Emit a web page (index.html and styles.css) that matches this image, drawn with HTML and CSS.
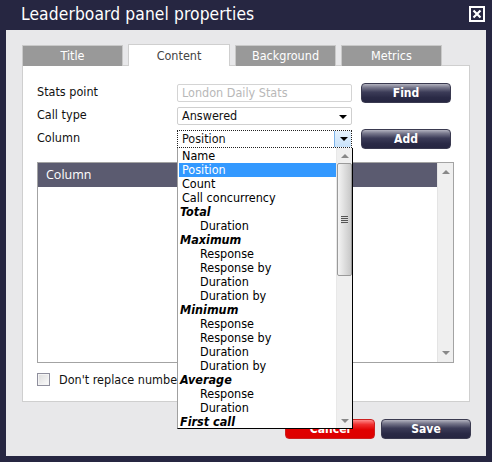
FILE: index.html
```html
<!DOCTYPE html>
<html>
<head>
<meta charset="utf-8">
<link rel="stylesheet" href="styles.css">
</head>
<body>
<div class="titlebar">
  <span class="title">Leaderboard panel properties</span>
  <svg class="close" width="16" height="16" viewBox="0 0 16 16"><rect x="1" y="1" width="14" height="14" fill="none" stroke="#fff" stroke-width="2"/><path d="M4.5 4.5 L11.5 11.5 M11.5 4.5 L4.5 11.5" stroke="#fff" stroke-width="2.2"/></svg>
</div>
<div class="dialog">
  <div class="tabs">
    <div class="tab">Title</div>
    <div class="tab active">Content</div>
    <div class="tab">Background</div>
    <div class="tab">Metrics</div>
  </div>
  <div class="panel">
    <div class="form">
      <div class="label">Stats point</div>
      <div class="input placeholder">London Daily Stats</div>
      <div class="btn dark">Find</div>
      <div class="label">Call type</div>
      <div class="input select">Answered<span class="tri"></span></div>
      <div></div>
      <div class="label">Column</div>
      <div class="input select focus">Position<span class="arrowbox"><span class="tri"></span></span></div>
      <div class="btn dark">Add</div>
    </div>
    <div class="table">
      <div class="tmain">
        <div class="thead">Column</div>
      </div>
      <div class="vscroll">
        <span class="up"></span>
        <span class="down"></span>
      </div>
    </div>
    <div class="checkrow">
      <span class="checkbox"></span>
      <span class="checklabel">Don't replace numbers with names</span>
    </div>
  </div>
  <div class="footer">
    <div class="btn red">Cancel</div>
    <div class="btn dark">Save</div>
  </div>
</div>
<div class="dropdown">
  <div class="options">
    <div class="opt">Name</div>
    <div class="opt sel">Position</div>
    <div class="opt">Count</div>
    <div class="opt">Call concurrency</div>
    <div class="grp">Total</div>
    <div class="opt sub">Duration</div>
    <div class="grp">Maximum</div>
    <div class="opt sub">Response</div>
    <div class="opt sub">Response by</div>
    <div class="opt sub">Duration</div>
    <div class="opt sub">Duration by</div>
    <div class="grp">Minimum</div>
    <div class="opt sub">Response</div>
    <div class="opt sub">Response by</div>
    <div class="opt sub">Duration</div>
    <div class="opt sub">Duration by</div>
    <div class="grp">Average</div>
    <div class="opt sub">Response</div>
    <div class="opt sub">Duration</div>
    <div class="grp">First call</div>
  </div>
  <div class="dscroll">
    <span class="up"></span>
    <span class="thumb"><span class="grip"></span></span>
    <span class="down"></span>
  </div>
</div>
</body>
</html>
```
FILE: styles.css
```css
* { box-sizing: border-box; }
html, body { margin: 0; padding: 0; }
body {
  width: 492px;
  height: 462px;
  overflow: hidden;
  background: #262641;
  font-family: "DejaVu Sans Condensed", "DejaVu Sans", sans-serif;
  font-size: 12.5px;
  color: #111;
  position: relative;
}
.titlebar {
  height: 30px;
  display: flex;
  align-items: center;
  justify-content: space-between;
  padding: 0 7px 2px 21px;
}
.title {
  color: #fff;
  font-size: 17.3px;
  letter-spacing: 0.1px;
}
.close { display: block; margin-top: 0; }
.dialog {
  margin: 0 6px;
  height: 426px;
  background: #e8e8ea;
  padding: 14px 15px 0 16px;
}
.tabs {
  display: flex;
  gap: 5px;
  align-items: flex-end;
  height: 22px;
  margin-bottom: -1px;
}
.tab {
  width: 101px;
  height: 21px;
  background: #999;
  border: 1px solid #c9c9c9;
  border-bottom: none;
  color: #fff;
  text-align: center;
  line-height: 20px;
}
.tab.active {
  position: relative;
  height: 22px;
  width: 102px;
  background: #fff;
  color: #444;
  border-color: #cfcfcf;
  line-height: 22px;
}
.panel {
  width: 448px;
  height: 337px;
  background: #fff;
  border: 1px solid #cfcfcf;
  padding: 15px 0 0 14px;
}
.form {
  display: grid;
  grid-template-columns: 131px 175px 90px;
  grid-auto-rows: 23px;
  column-gap: 9px;
  align-items: center;
}
.label { color: #111; margin-top: -2px; }
.input {
  height: 18px;
  border: 1px solid #d4d4d4;
  border-radius: 2px;
  padding: 0 0 0 4px;
  line-height: 16px;
  position: relative;
  color: #111;
}
.placeholder { color: #b8b8b8; height: 18px; }
.select { border-color: #cfcfcf; }
.tri {
  position: absolute;
  right: 4px;
  top: 7px;
  width: 0;
  height: 0;
  border-left: 4px solid transparent;
  border-right: 4px solid transparent;
  border-top: 4px solid #000;
}
.focus {
  border: 1px dotted #222;
  border-radius: 0;
  height: 18px;
}
.arrowbox {
  position: absolute;
  right: 0;
  top: 0;
  width: 17px;
  height: 16px;
  background: linear-gradient(#e6f2fd, #c8e2fa);
  border-left: 1px solid #7eb4ea;
}
.arrowbox .tri { right: 3px; top: 6px; }
.btn {
  width: 90px;
  height: 20px;
  border-radius: 4px;
  color: #fff;
  font-weight: bold;
  font-size: 12px;
  text-align: center;
  line-height: 19px;
}
.dark {
  background: linear-gradient(#b4b4c0 0%, #7a7a8e 18%, #3c3c58 45%, #2a2a46 75%, #262641 100%);
  border: 1px solid #3a3a50;
}
.red {
  background: linear-gradient(#ff8a8a 0%, #f03030 25%, #e00000 55%, #dd0000 100%);
  border: 1px solid #cc2020;
}
.table {
  margin-top: 12px;
  width: 417px;
  height: 201px;
  border: 1px solid #a3a3a3;
  display: flex;
}
.tmain { flex: 1; }
.thead {
  height: 24px;
  background: #5b5b70;
  color: #fff;
  font-family: "Open Sans", sans-serif;
  font-size: 12.5px;
  line-height: 24px;
  padding-left: 8px;
}
.vscroll, .dscroll {
  width: 16px;
  background: #efefef;
  border-left: 1px solid #e4e4e4;
  display: flex;
  flex-direction: column;
  justify-content: space-between;
  align-items: center;
  padding: 7px 0 7px;
}
.up, .down {
  width: 0; height: 0;
  border-left: 4px solid transparent;
  border-right: 4px solid transparent;
}
.up { border-bottom: 4px solid #888; }
.down { border-top: 4px solid #888; }
.checkrow {
  margin-top: 10px;
  display: flex;
  align-items: center;
  gap: 9px;
  height: 13px;
  white-space: nowrap;
}
.checklabel {
  width: 118px;
  overflow: hidden;
}
.checkbox {
  width: 13px;
  height: 13px;
  border: 1px solid #8f8f9d;
  background: linear-gradient(135deg, #dcdcdc, #fbfbfb);
  box-shadow: inset 0 0 0 1px #f4f4f4;
}
.footer {
  display: flex;
  justify-content: flex-end;
  gap: 6px;
  margin-top: 17px;
}
.dropdown {
  position: absolute;
  left: 177px;
  top: 148px;
  width: 176px;
  height: 281px;
  background: #fff;
  border-left: 1px solid #a0a0a0;
  border-right: 1px solid #000;
  border-bottom: 1px solid #000;
  display: flex;
}
.options { flex: 1; padding-top: 1px; }
.opt, .grp {
  height: 14px;
  line-height: 14px;
  padding-left: 4px;
  white-space: nowrap;
  color: #000;
}
.opt.sel { background: #3399ff; color: #fff; margin-left: 1px; padding-left: 3px; }
.opt.sub { padding-left: 22px; }
.grp { font-weight: bold; font-style: italic; padding-left: 2px; }
.dscroll {
  width: 16px;
  justify-content: flex-start;
  padding: 6px 0 5px;
  border-left: 1px solid #e8e8e8;
}
.dscroll .thumb {
  margin-top: 5px;
  width: 15px;
  height: 113px;
  border: 1px solid #9a9a9a;
  border-radius: 2px;
  background: linear-gradient(90deg, #f4f4f4, #dadada 60%, #c8c8c8);
  display: flex;
  align-items: center;
  justify-content: center;
}
.grip {
  width: 7px;
  height: 8px;
  background: repeating-linear-gradient(#555 0 1px, #ddd 1px 2px);
}
.dscroll .down { margin-top: auto; }
```
